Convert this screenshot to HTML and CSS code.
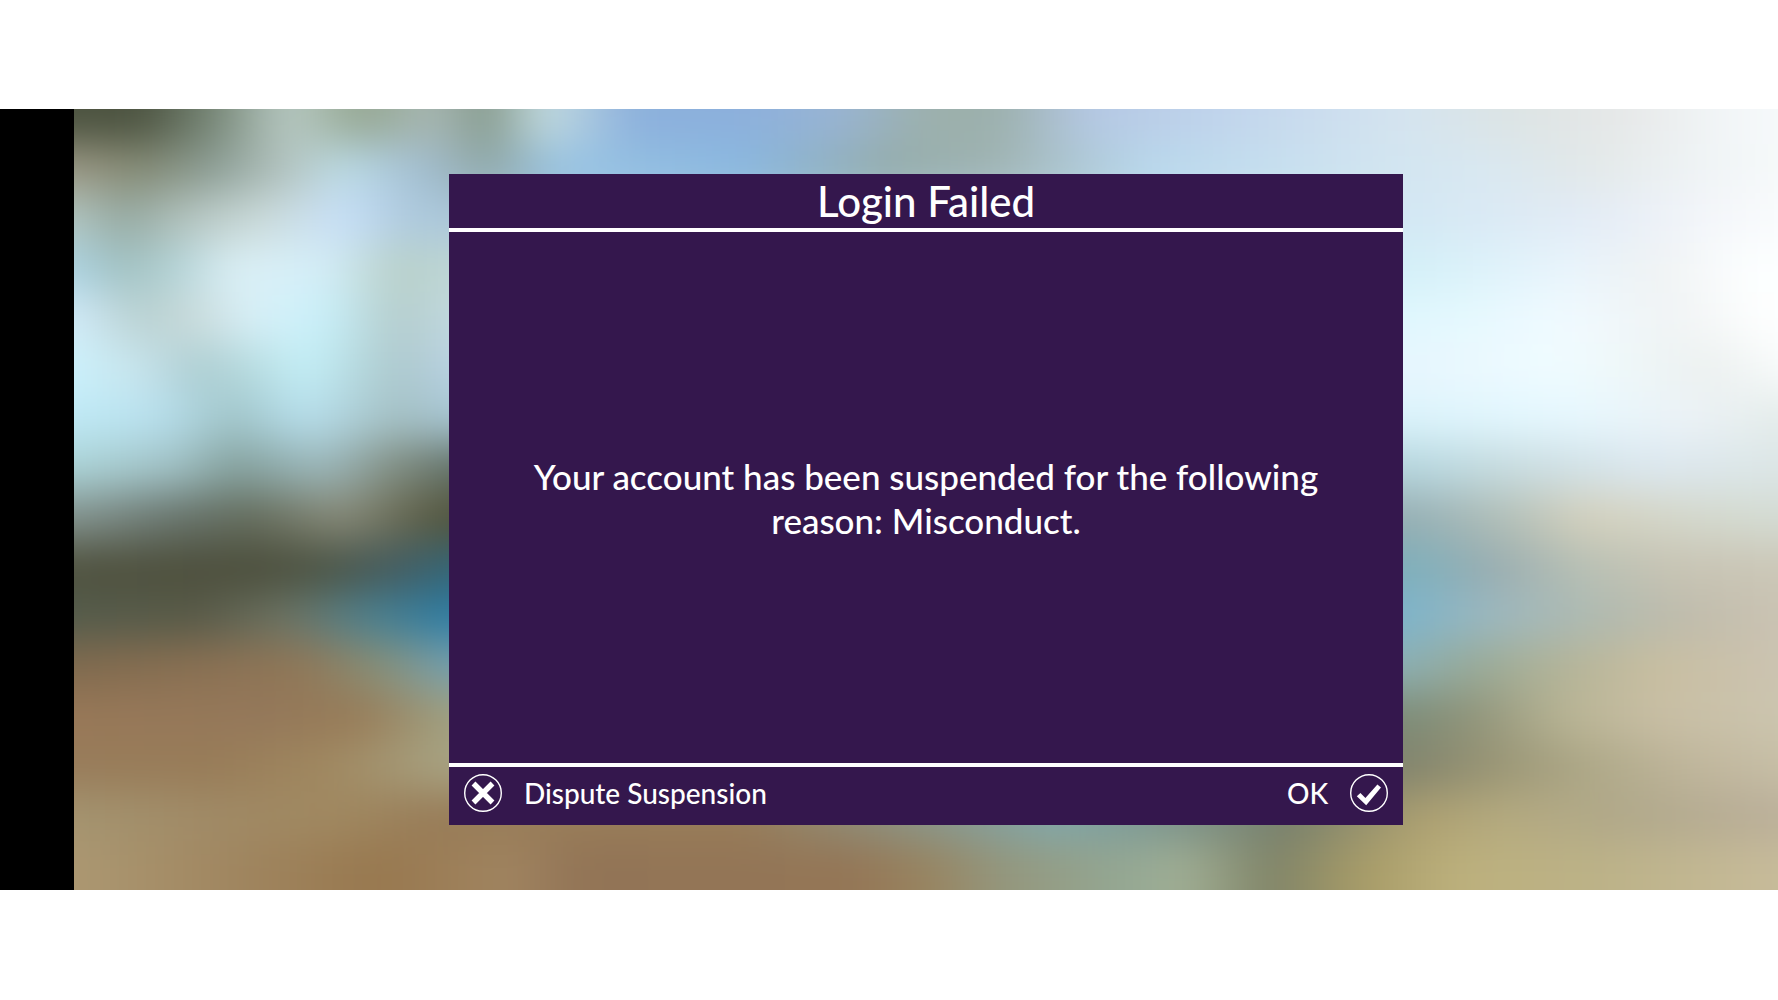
FILE: index.html
```html
<!DOCTYPE html>
<html lang="en">

<head>
    <meta charset="UTF-8">
    <meta name="viewport" content="width=device-width, initial-scale=1.0">
    <title>Login Failed</title>
    <link rel="stylesheet" href="styles.css">
</head>

<body>

    <main class="screen">
        <!-- blurred beach, one strip per height -->
        <div class="backdrop" aria-hidden="true">
            <div class="scene">
                <div class="strip canopy"></div>
                <div class="strip leaves"></div>
                <div class="strip sky-high"></div>
                <div class="strip sky"></div>
                <div class="strip sky-mid"></div>
                <div class="strip sky-low"></div>
                <div class="strip haze"></div>
                <div class="strip horizon"></div>
                <div class="strip trees"></div>
                <div class="strip shade"></div>
                <div class="strip water"></div>
                <div class="strip shore"></div>
                <div class="strip sand-high"></div>
                <div class="strip sand"></div>
                <div class="strip sand-low"></div>
                <div class="strip ground"></div>
            </div>
        </div>

        <section class="dialog" role="alertdialog" aria-labelledby="dialog-title" aria-describedby="dialog-text">
            <h1 class="dialog-title" id="dialog-title">Login Failed</h1>
            <div class="dialog-body">
                <p id="dialog-text">Your account has been suspended for the following reason: Misconduct.</p>
            </div>
            <div class="dialog-actions">
                <button type="button" class="action">
                    <svg class="icon" viewBox="0 0 38 38" aria-hidden="true">
                        <circle cx="19" cy="19" r="18.3" />
                        <path class="cross" d="M9.5 9.5L28.5 28.5M28.5 9.5L9.5 28.5" />
                    </svg>
                    Dispute Suspension
                </button>
                <button type="button" class="action">
                    OK
                    <svg class="icon" viewBox="0 0 38 38" aria-hidden="true">
                        <circle cx="19" cy="19" r="18.3" />
                        <path class="check" d="M6.8 22.2L10.4 19L15.4 24L27.4 10.6L31 13.4L16.2 31.2Z" />
                    </svg>
                </button>
            </div>
        </section>
    </main>

</body>

</html>
```

FILE: styles.css
```css
* {
    box-sizing: border-box;
}

body {
    margin: 0;
    padding-bottom: 1px;
    min-height: 100vh;
    display: flex;
    flex-direction: column;
    justify-content: center;
    background-color: #fff;
    font-family: Lato, "Open Sans", sans-serif;
    font-weight: 500;
    color: #fff;
}

.screen {
    position: relative;
    display: flex;
    justify-content: center;
    aspect-ratio: 1778 / 781;
    padding: 65px 0 65px 74px;
    background-color: #000;
}

/* background scene */

.backdrop {
    position: absolute;
    top: 0;
    right: 0;
    bottom: 0;
    left: 74px;
    overflow: hidden;
    display: flex;
}

/* runs past the edges so that they stay solid under the blur */
.scene {
    flex: 1;
    margin: -60px;
    display: flex;
    flex-direction: column;
    filter: blur(20px);
}

.strip {
    flex: 50;
}

.strip:first-child {
    flex: 95;
}

.strip:last-child {
    flex: 110;
}

.canopy {
    background: linear-gradient(90deg, #4c5340 0%, #4c5340 7%, #788878 11%, #b8cac4 15%, #94a690 19%, #a8b8b4 23%, #84988a 26%, #c4dce0 29%, #8cb0dc 34%, #8cb0dc 40%, #98b4d4 45%, #9cb0ac 50%, #9cb0ac 54%, #b4c8e4 59%, #c0d4ec 66%, #d4e4f0 76%, #dce4e4 82%, #e6e8e8 88%, #f2f6f8 94%, #fafcfd 100%);
}

.leaves {
    background: linear-gradient(90deg, #9c9884 3%, #848a74 7%, #8c9e96 11%, #b4c4c0 15%, #bcdce6 18%, #a4c0d4 22%, #90a8a8 26%, #98c4e4 30%, #8ab8e0 40%, #94acaa 48%, #a0b4b4 54%, #b8d8ec 62%, #d0e4f0 74%, #d8e8f2 80%, #e2e8e8 86%, #f0f4f6 93%, #fafefd 100%);
}

.sky-high {
    background: linear-gradient(90deg, #b4c8c4 3%, #94a8a0 6%, #b8c8c4 10%, #ccdcdc 14%, #c8e0fa 18%, #acc8dc 22%, #a8c8dc 40%, #d4e8f4 77%, #e4ecf6 87%, #f4f6fa 93%, #fdffff 100%);
}

.sky {
    background: linear-gradient(90deg, #acd4e4 3%, #a0c0c0 6%, #b4d4d8 9%, #dcf0f6 12%, #d4eef8 17%, #b8d0c8 21%, #c0d8d8 25%, #d4f0f8 77%, #e8f4fc 85%, #eff2f3 90%, #fcffff 95%);
}

.sky-mid {
    background: linear-gradient(90deg, #d4ecfa 3%, #b8d0d0 7%, #ccdcdc 10%, #d8f0f8 13%, #c8f0fa 17%, #b4cccc 21%, #c4dce4 25%, #e0f8fe 77%, #f0faff 85%, #f0f3f4 91%, #feffff 96%);
}

.sky-low {
    background: linear-gradient(90deg, #ccf2fc 3%, #c8e4ec 7%, #acccd0 10%, #b8dce0 13%, #c4f0f8 16%, #acc8cc 21%, #bcd4e8 25%, #e8f6fe 77%, #f0fcff 85%, #ecf0ef 93%, #fbfefe 98%);
}

.haze {
    background: linear-gradient(90deg, #c0eaf6 3%, #b8e0ee 8%, #a0c4c8 12%, #b8e0ee 16%, #a4c0c4 21%, #a8c8d8 25%, #dcf4fc 77%, #e6f8ff 85%, #ecf2f6 92%, #e4ecea 97%);
}

.horizon {
    background: linear-gradient(90deg, #acd4d8 3%, #a0c0c4 9%, #84a09c 12%, #9cb8bc 17%, #808c80 21%, #5c6c64 25%, #b8d8e0 77%, #c8dce0 82%, #dce8f0 90%, #dce6e6 97%);
}

.trees {
    background: linear-gradient(90deg, #849490 3%, #68746c 9%, #646c5c 13%, #888a78 18%, #58583f 23%, #505038 26%, #98b0b4 77%, #b4c0b8 82%, #d4d0bc 86%, #d4d8cc 92%, #d4dcd4 97%);
}

.shade {
    background: linear-gradient(90deg, #50523f 3%, #4c4e3c 13%, #4c5444 17%, #445c60 21%, #30687c 25%, #80b0bc 77%, #98acb0 81%, #b8c0b4 86%, #c8c4b4 91%, #ccc8b8 98%);
}

.water {
    background: linear-gradient(90deg, #545c4c 3%, #585a48 10%, #6c7464 15%, #50808c 19%, #2c7ca4 24%, #3888b4 28%, #7cb4cc 76%, #9cb8c0 81%, #b0bab0 87%, #c0bcac 92%, #ccc4b4 98%);
}

.shore {
    background: linear-gradient(90deg, #806a4e 3%, #8c7254 12%, #907858 16%, #889078 20%, #74a0b0 24%, #70a8c0 28%, #8cb0b4 76%, #98aa98 80%, #b4b498 85%, #c8bea0 90%, #ccc4b4 98%);
}

.sand-high {
    background: linear-gradient(90deg, #987858 3%, #94785a 14%, #987c58 19%, #a0a080 24%, #a8ac90 28%, #7c8c78 76%, #90947a 80%, #b8b494 85%, #c8bea4 90%, #ccc6b0 98%);
}

.sand {
    background: linear-gradient(90deg, #987c5a 3%, #987c58 11%, #a08860 17%, #a8a484 24%, #88a0a0 60%, #80826c 76%, #989474 81%, #b0aa8a 87%, #c0b69c 92%, #c8c0a8 98%);
}

.sand-low {
    background: linear-gradient(90deg, #a49470 3%, #a08a66 11%, #a08860 18%, #987c58 23%, #987c58 40%, #80a8ac 57%, #78806c 70%, #ac9f70 77%, #b4aa80 82%, #b0a88a 88%, #bcb09c 98%);
}

.ground {
    background: linear-gradient(90deg, #ac9872 3%, #a08660 12%, #98784f 20%, #a08460 27%, #927456 31%, #947656 46%, #988460 50%, #94967c 54%, #94a894 61%, #a0ae94 64%, #808468 69%, #a89c68 74%, #bcb07c 79%, #bcb288 87%, #c8bc9c 98%);
}

/* dialog */

.dialog {
    position: relative;
    width: 56%;
    display: flex;
    flex-direction: column;
    background-color: #34174d;
}

.dialog-title {
    margin: 0;
    font-size: 42px;
    font-weight: 500;
    line-height: 54px;
    text-align: center;
    border-bottom: 4px solid #fff;
}

.dialog-body {
    flex: 1;
    display: flex;
    align-items: center;
    justify-content: center;
    padding: 0 64px;
}

.dialog-body p {
    margin: 0;
    font-size: 35px;
    line-height: 44px;
    text-align: center;
}

.dialog-actions {
    display: flex;
    justify-content: space-between;
    padding: 3px 15px 9px;
    border-top: 4px solid #fff;
}

.action {
    display: flex;
    align-items: center;
    gap: 22px;
    padding: 0;
    border: 0;
    background: none;
    color: inherit;
    font-family: inherit;
    font-size: 28px;
    font-weight: inherit;
    line-height: 46px;
    cursor: pointer;
}

.icon {
    width: 38px;
    height: 38px;
    fill: none;
    stroke: #fff;
}

.icon circle {
    stroke-width: 1.4;
}

.cross {
    stroke-width: 5.4;
}

.check {
    fill: #fff;
    stroke: none;
}
```
